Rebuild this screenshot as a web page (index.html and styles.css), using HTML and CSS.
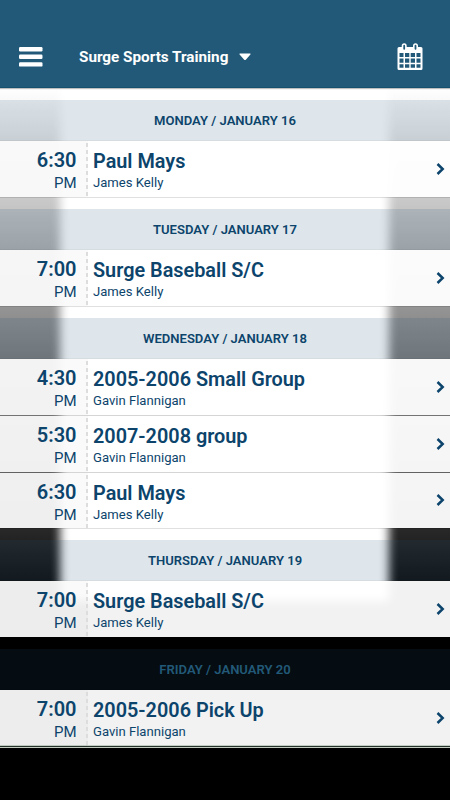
FILE: index.html
```
<!DOCTYPE html>
<html lang="en">

<head>
  <meta charset="UTF-8">
  <meta name="viewport" content="width=device-width, initial-scale=1.0">
  <title>Surge Sports Training</title>
  <link rel="stylesheet" href="styles.css">
</head>

<body>
  <header class="navbar">
    <svg class="menu" width="24" height="20" viewBox="0 0 24 20" fill="#fff">
      <rect x="0" y="0" width="23.5" height="4.4" rx="1.2" />
      <rect x="0" y="7.6" width="23.5" height="4.4" rx="1.2" />
      <rect x="0" y="15.2" width="23.5" height="4.4" rx="1.2" />
    </svg>
    <h1 class="team">Surge Sports Training</h1>
    <svg class="caret" width="12" height="8" viewBox="0 0 12 8">
      <path d="M.8 .5h10.4q.8.4.2 1L6.8 6.7q-.8.7-1.6 0L.6 1.500q-.6-.6.2-1z" fill="#fff" />
    </svg>
    <svg class="calendar" width="26" height="28" viewBox="0 0 26 28">
      <path fill="#fff" fill-rule="evenodd" d="M2 4H24a1.500 1.500 0 0 1 1.500 1.500V25.500a1.500 1.500 0 0 1-1.500 1.500H2A1.500 1.500 0 0 1 .5 25.500V5.500A1.500 1.500 0 0 1 2 4z
        M2.500 10v4h4v-4z M8 10v4h4.300v-4z M13.700 10v4h4.300v-4z M19.500 10v4h4v-4z
        M2.500 15.500v4.300h4v-4.300z M8 15.500v4.300h4.300v-4.300z M13.700 15.500v4.300h4.300v-4.300z M19.500 15.500v4.300h4v-4.300z
        M2.500 21.300v3.400h4v-3.400z M8 21.300v3.400h4.300v-3.400z M13.700 21.300v3.400h4.300v-3.400z M19.500 21.300v3.400h4v-3.400z" />
      <g fill="#225978" stroke="#fff" stroke-width="1.600">
        <rect x="5.500" y="1" width="3.400" height="6.500" rx="1.700" />
        <rect x="16.800" y="1" width="3.400" height="6.500" rx="1.700" />
      </g>
    </svg>
  </header>

  <main class="schedule">
    <section class="day">
      <h2 class="date">MONDAY / JANUARY 16</h2>
      <div class="event">
        <div class="time"><b>6:30</b><span>PM</span></div>
        <div class="info"><h3>Paul Mays</h3><p>James Kelly</p></div>
        <svg class="arrow" width="9" height="14" viewBox="0 0 9 14"><path d="M1.500 2L6.700 7L1.500 12" /></svg>
      </div>
    </section>

    <section class="day">
      <h2 class="date">TUESDAY / JANUARY 17</h2>
      <div class="event">
        <div class="time"><b>7:00</b><span>PM</span></div>
        <div class="info"><h3>Surge Baseball S/C</h3><p>James Kelly</p></div>
        <svg class="arrow" width="9" height="14" viewBox="0 0 9 14"><path d="M1.500 2L6.700 7L1.500 12" /></svg>
      </div>
    </section>

    <section class="day">
      <h2 class="date">WEDNESDAY / JANUARY 18</h2>
      <div class="event">
        <div class="time"><b>4:30</b><span>PM</span></div>
        <div class="info"><h3>2005-2006 Small Group</h3><p>Gavin Flannigan</p></div>
        <svg class="arrow" width="9" height="14" viewBox="0 0 9 14"><path d="M1.500 2L6.700 7L1.500 12" /></svg>
      </div>
      <div class="event">
        <div class="time"><b>5:30</b><span>PM</span></div>
        <div class="info"><h3>2007-2008 group</h3><p>Gavin Flannigan</p></div>
        <svg class="arrow" width="9" height="14" viewBox="0 0 9 14"><path d="M1.500 2L6.700 7L1.500 12" /></svg>
      </div>
      <div class="event">
        <div class="time"><b>6:30</b><span>PM</span></div>
        <div class="info"><h3>Paul Mays</h3><p>James Kelly</p></div>
        <svg class="arrow" width="9" height="14" viewBox="0 0 9 14"><path d="M1.500 2L6.700 7L1.500 12" /></svg>
      </div>
    </section>

    <section class="day">
      <h2 class="date">THURSDAY / JANUARY 19</h2>
      <div class="event">
        <div class="time"><b>7:00</b><span>PM</span></div>
        <div class="info"><h3>Surge Baseball S/C</h3><p>James Kelly</p></div>
        <svg class="arrow" width="9" height="14" viewBox="0 0 9 14"><path d="M1.500 2L6.700 7L1.500 12" /></svg>
      </div>
    </section>

    <section class="day">
      <h2 class="date">FRIDAY / JANUARY 20</h2>
      <div class="event last">
        <div class="time"><b>7:00</b><span>PM</span></div>
        <div class="info"><h3>2005-2006 Pick Up</h3><p>Gavin Flannigan</p></div>
        <svg class="arrow" width="9" height="14" viewBox="0 0 9 14"><path d="M1.500 2L6.700 7L1.500 12" /></svg>
      </div>
    </section>
  </main>
</body>

</html>
```
FILE: styles.css
```
* {
  box-sizing: border-box;
  margin: 0;
  padding: 0;
}

body {
  height: 800px;
  overflow: hidden;
  background-color: #000;
  color: #0c446c;
  font-family: Roboto, "Liberation Sans", sans-serif;
}

/* top bar */
.navbar {
  position: relative;
  z-index: 1;
  display: flex;
  align-items: center;
  height: 88px;
  padding: 27px 27.500px 0 19px;
  background-color: #225978;
  border-bottom: 1px solid #15506f;
  box-shadow: 0 1px 1px rgba(0, 0, 0, .25);
}

.team {
  margin-left: 36px;
  color: #fff;
  font-size: 15.250px;
  font-weight: 700;
  line-height: 20px;
}

.caret {
  margin-left: 11px;
  margin-bottom: 1px;
}

.calendar {
  margin-left: auto;
}

/* list */
.schedule {
  position: relative;
  z-index: 0;
  height: 712px;
  padding-top: 12.300px;
  background: linear-gradient(#fff, #000 524px);
}

/* soft light panel behind the rows */
.schedule::before {
  content: "";
  position: absolute;
  z-index: -1;
  left: 60px;
  top: -10px;
  width: 329px;
  height: 523px;
  background-color: #fff;
  filter: blur(5px);
}

.day {
  margin-bottom: 11.100px;
}

.date {
  height: 40.900px;
  background-color: rgba(34, 89, 120, .15);
  border-bottom: 1px solid rgba(0, 0, 0, .04);
  font-size: 13.050px;
  font-weight: 600;
  line-height: 41px;
  text-align: center;
}

.day:last-child .date {
  color: #225978;
}

.event {
  display: flex;
  align-items: center;
  height: 56.850px;
  background-color: rgba(255, 255, 255, .95);
  background-clip: padding-box;
  border-bottom: 1px solid rgba(0, 0, 0, .12);
}

.event + .event {
  box-shadow: 0 -1px rgba(190, 190, 190, .3);
}

.time {
  display: flex;
  flex-direction: column;
  align-self: stretch;
  width: 88px;
  padding: 7px 11.500px 0 0;
  text-align: right;
  background:
    repeating-linear-gradient(transparent 0 2px, #ddd 2px 6px, transparent 6px 7px) right / 2px 100% no-repeat,
    rgba(0, 0, 0, .02);
}

.time b {
  font-size: 20px;
  font-weight: 600;
  line-height: 24px;
}

.time span {
  font-size: 15px;
  line-height: 22px;
}

.info {
  flex: 1;
  align-self: stretch;
  padding: 8px 0 0 5px;
}

.info h3 {
  font-size: 19.850px;
  font-weight: 600;
  line-height: 25px;
}

.info p {
  font-size: 13.100px;
  line-height: 18px;
}

.arrow {
  margin-right: 5px;
  fill: none;
  stroke: #0c446c;
  stroke-width: 2.500;
}

.last {
  height: 58px;
  border-bottom: 1px solid #c3ccc3;
  box-shadow: inset 0 -1px #26302b, inset 0 -2px #c3ccc3;
}

.last .arrow {
  margin-bottom: 1px;
}
```
